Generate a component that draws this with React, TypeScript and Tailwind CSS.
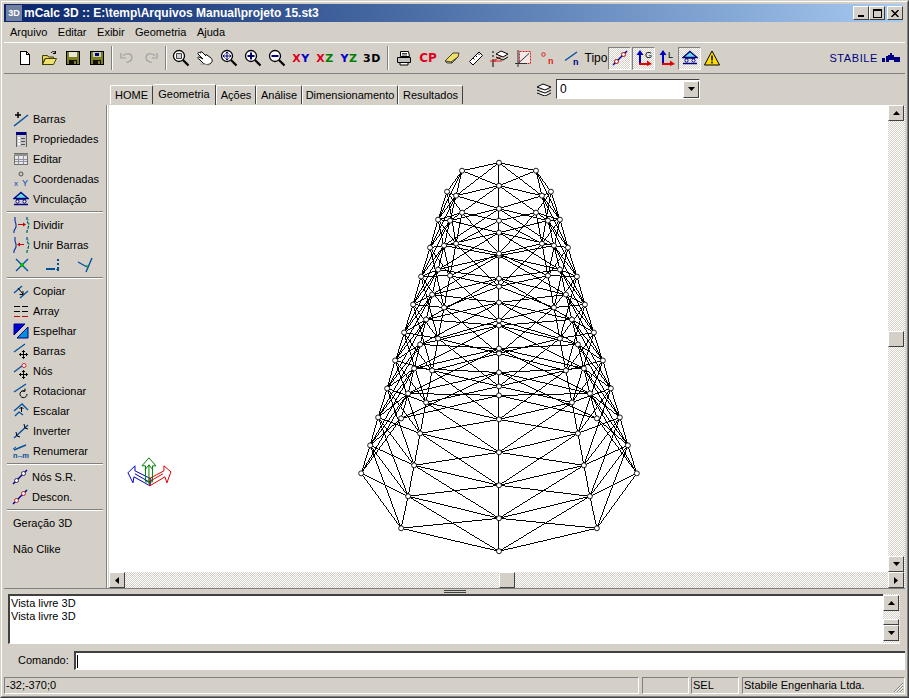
import type { ReactNode } from "react";

const raised = "border border-t-white border-l-white border-r-[#404040] border-b-[#404040] bg-[#d4d0c8]";
const sunken = "border border-t-[#808080] border-l-[#808080] border-r-white border-b-white";
const dither = "bg-[repeating-conic-gradient(#ffffff_0_25%,#d4d0c8_0_50%)] bg-[length:2px_2px]";

function Ico({ children, w = 16, h = 16, crisp = false }: { children: ReactNode; w?: number; h?: number; crisp?: boolean }) {
  return (
    <svg width={w} height={h} viewBox={`0 0 ${w} ${h}`} fill="none" shapeRendering={crisp ? "crispEdges" : undefined} className="shrink-0">
      {children}
    </svg>
  );
}

function Mag({ children }: { children?: ReactNode }) {
  return (
    <Ico w={18} h={18}>
      <circle cx="7" cy="7" r="5.5" fill="#ffffff" stroke="#000" strokeWidth="1.3" />
      <path d="M11 11l5.5 5.5" stroke="#000" strokeWidth="2.2" />
      {children}
    </Ico>
  );
}

function Floppy({ color, extra }: { color: string; extra?: boolean }) {
  return (
    <Ico crisp>
      <path d="M1.5 1.5h13v13h-13z" fill={color} stroke="#000" />
      <path d="M4 2h8v5H4z" fill={extra ? "#c8d0b0" : "#e8e8d8"} />
      <path d="M4 10h8v4H4z" fill="#101010" />
      <path d="M9 11h2v3H9z" fill={color} />
      {extra && <path d="M6 3h4v3H6z" fill="#000080" />}
    </Ico>
  );
}

function Support() {
  return (
    <Ico>
      <path d="M8 1.5L15 7.5H1z" fill="#66e0e8" stroke="#000080" strokeWidth="1.4" />
      <path d="M3 8h10M1 13.5h14" stroke="#000080" strokeWidth="1.4" />
      <circle cx="4.5" cy="10.5" r="1.6" fill="#fff" stroke="#000080" />
      <circle cx="11.5" cy="10.5" r="1.6" fill="#fff" stroke="#000080" />
    </Ico>
  );
}

function Axes({ letter }: { letter: string }) {
  return (
    <Ico w={18} h={16}>
      <path d="M5 14V3" stroke="#0000c0" strokeWidth="2" />
      <path d="M5 0L1.5 5h7z" fill="#0000c0" />
      <path d="M4 14h9" stroke="#e00000" strokeWidth="2" />
      <path d="M12 10.5l5 3.5-5 2z" fill="#e00000" />
      <text x="10" y="8" fontSize="9" fill="#000" fontFamily="Liberation Sans, sans-serif">{letter}</text>
    </Ico>
  );
}

function BarNodes({ end = "#c00000", bar = "#0000a0" }: { end?: string; bar?: string }) {
  return (
    <Ico>
      <path d="M1 15L15 1" stroke={bar} strokeWidth="1.4" />
      <circle cx="4.500" cy="11.500" r="2" fill="#fff" stroke={end} />
      <circle cx="11.500" cy="4.500" r="2" fill="#fff" stroke={end} />
    </Ico>
  );
}

function MoveCross() {
  return (
    <path d="M10.5 7.5v8M6.5 11.5h8M9 9l1.5-1.5L12 9M9 14l1.5 1.5L12 14M8 10l-1.5 1.5L8 13M13 10l1.5 1.5L13 13" stroke="#000" />
  );
}

function Zigzag({ arrow }: { arrow: string }) {
  return (
    <Ico w={18} h={17}>
      <path d="M2 0v4l1 3v3l-2 4v2" stroke="#0030a0" strokeWidth="1.100" />
      <path d="M14 0v4l1.500 3v3l-1.500 4v2" stroke="#0030a0" strokeWidth="1.100" strokeDasharray="3 1.500" />
      <path d="M15 2v2M16 6v2M15 10v2M14 14v2" stroke="#00c040" />
      <path d="M5 7.500h6" stroke="#c00000" />
      <path d={arrow} fill="#c00000" />
    </Ico>
  );
}

const tool = "w-[24px] h-[24px] flex items-center justify-center shrink-0";

function Tool({ children }: { children: ReactNode }) {
  return <div className={tool}>{children}</div>;
}

function Sep() {
  return (
    <div className="w-[6px] h-[24px] flex justify-center shrink-0">
      <div className="w-[2px] h-full border-l border-l-[#808080] border-r border-r-white" />
    </div>
  );
}

function Pressed({ children }: { children: ReactNode }) {
  return <div className={`w-[23px] h-[23px] flex items-center justify-center shrink-0 ${sunken} ${dither}`}>{children}</div>;
}

function Letters({ a, ca, b, cb }: { a: string; ca: string; b: string; cb: string }) {
  return (
    <Tool>
      <span className="font-bold text-[11px] tracking-[0.5px] font-['DejaVu_Sans',sans-serif]">
        <span style={{ color: ca }}>{a}</span>
        <span style={{ color: cb }}>{b}</span>
      </span>
    </Tool>
  );
}

function Toolbar() {
  return (
    <div className="h-[32px] flex items-center pl-[9px] border-t border-t-white border-b border-b-[#808080]">
      <Tool>
        <Ico crisp>
          <path d="M3.5 1.5h6l3 3v10h-9z" fill="#fff" stroke="#000" />
          <path d="M9.5 1.5v3h3" stroke="#000" />
        </Ico>
      </Tool>
      <Tool>
        <Ico>
          <path d="M1.5 5.5h5l1 1.5h5v2h-9l-2 6z" fill="#e8d060" stroke="#404000" />
          <path d="M1.5 14.5l3-6h11l-3 6z" fill="#f0e070" stroke="#404000" />
          <path d="M10 3c1.5-2 3.5-2 4.5 0M14.5 1v2.5H12" stroke="#000" />
        </Ico>
      </Tool>
      <Tool><Floppy color="#7f7f20" /></Tool>
      <Tool><Floppy color="#7f7f20" extra /></Tool>
      <Sep />
      <Tool>
        <Ico>
          <path d="M4 5.5c4-3 9-2 9 2 0 3-3 4.5-6 5" stroke="#a0a0a0" strokeWidth="1.2" />
          <path d="M2 3v5h5" stroke="#a0a0a0" strokeWidth="1.2" />
        </Ico>
      </Tool>
      <Tool>
        <Ico>
          <path d="M12 5.5c-4-3-9-2-9 2 0 3 3 4.5 6 5" stroke="#a0a0a0" strokeWidth="1.2" />
          <path d="M14 3v5H9" stroke="#a0a0a0" strokeWidth="1.2" />
        </Ico>
      </Tool>
      <Sep />
      <Tool>
        <Mag><path d="M4.5 4.5h5v5h-5z" fill="#d0d0d0" stroke="#404040" /></Mag>
      </Tool>
      <Tool>
        <Ico w={18} h={16}>
          <path d="M2 4l5 5-4-2c-2 0-1 2 0 2l4 4c2 2 6 2 8 0 2-2 1-4 0-5l-4-3c-1-1-2 0-1 1L6 2C5 1 4 2 5 3L3.500 2.500C2.500 2 1.500 3 2 4z" fill="#fff" stroke="#000" />
          <path d="M4 14l9 1" stroke="#a0a0a0" />
        </Ico>
      </Tool>
      <Tool>
        <Mag><path d="M7 3v8M3 7h8M5.500 4.500L7 3l1.500 1.500M5.500 9.500L7 11l1.500-1.500M4.500 5.500L3 7l1.500 1.500M9.500 5.500L11 7l-1.500 1.500" stroke="#000080" /></Mag>
      </Tool>
      <Tool>
        <Mag><path d="M7 3.500v7M3.500 7h7" stroke="#000080" strokeWidth="2" /></Mag>
      </Tool>
      <Tool>
        <Mag><path d="M3.500 7h7" stroke="#000080" strokeWidth="2" /></Mag>
      </Tool>
      <Letters a="X" ca="#e00020" b="Y" cb="#0000c8" />
      <Letters a="X" ca="#e00020" b="Z" cb="#008000" />
      <Letters a="Y" ca="#0000c8" b="Z" cb="#008000" />
      <div className="w-[24px] h-[24px] flex items-center justify-center shrink-0 -ml-[1px] mr-[1px] font-bold text-[11px] tracking-[0.5px] text-black font-['DejaVu_Sans',sans-serif]">3D</div>
      <Sep />
      <div className="w-[1px]" />
      <Tool>
        <Ico>
          <path d="M4.500 1.500h8l1 5h-9z" fill="#fff" stroke="#000" />
          <path d="M1.500 7.500h13v5h-13z" fill="#c0c0c0" stroke="#000" />
          <path d="M4 12.500h8v2.500H4z" fill="#fff" stroke="#000" />
          <path d="M6 3.500h5M6 5h5" stroke="#404040" />
        </Ico>
      </Tool>
      <div className={`${tool} font-bold text-[12px] text-[#e00020] font-['DejaVu_Sans',sans-serif]`}>CP</div>
      <Tool>
        <Ico>
          <path d="M1 11l8-8h6l-1 4-6 6H3z" fill="#f0e060" stroke="#404040" />
          <path d="M1 11l6 1 1 1M7 12l7-5" stroke="#404040" />
        </Ico>
      </Tool>
      <Tool>
        <Ico>
          <path d="M1.500 11.500L11 2l3.500 3.500L5 15z" fill="#fff" stroke="#000" />
          <path d="M5 8l1.500 1.500M7.500 5.500L9 7M10 3.500l1.500 1.500" stroke="#000" />
        </Ico>
      </Tool>
      <Tool>
        <Ico w={20} h={17}>
          <path d="M3 1v2M3 5v2M3 9v8" stroke="#000" />
          <path d="M0 11h6M3 11l9-5M3 11h9" stroke="#d02020" />
          <path d="M6 4l5-3 7 3-5 3z" fill="#fff" stroke="#000" />
          <path d="M6 7l7 3 5-3" stroke="#000" />
        </Ico>
      </Tool>
      <div className="w-[24px] h-[24px] flex items-center justify-center shrink-0 -ml-[1px] mr-[1px]">
        <Ico w={17} h={17}>
          <path d="M4.500 1.500h11v12h-11z" fill="#f4e8e8" stroke="#d02020" strokeDasharray="2 1" />
          <path d="M3 0v17M0 13.500h12M3 13.500l11-10" stroke="#303030" />
        </Ico>
      </div>
      <Tool>
        <Ico>
          <circle cx="3.500" cy="4.500" r="1.800" stroke="#e02020" />
          <text x="8" y="14" fontSize="9" fontWeight="bold" fill="#e02020" fontFamily="Liberation Sans, sans-serif">n</text>
        </Ico>
      </Tool>
      <Tool>
        <Ico>
          <path d="M1 10.500L13 2" stroke="#0050a0" strokeWidth="1.400" />
          <text x="9" y="15" fontSize="9" fontWeight="bold" fill="#000080" fontFamily="Liberation Sans, sans-serif">n</text>
        </Ico>
      </Tool>
      <div className="w-[24px] text-center text-[12px] shrink-0">Tipo</div>
      <Pressed><BarNodes /></Pressed>
      <div className="w-[1px]" />
      <Pressed><Axes letter="G" /></Pressed>
      <div className="w-[23px] flex justify-center shrink-0"><Axes letter="L" /></div>
      <Pressed><Support /></Pressed>
      <div className="w-[3px]" />
      <Ico>
        <path d="M8 1L15.500 15H.500z" fill="#ffe000" stroke="#000" />
        <path d="M8 5.500v5M8 11.500v2" stroke="#000" strokeWidth="1.500" />
      </Ico>
      <div className="flex-1" />
      <span className="text-[11px] tracking-[0.6px] text-[#000080] font-['Liberation_Sans',sans-serif]">STABILE</span>
      <div className="ml-[4px] mr-[5px]">
        <Ico w={18} h={10} crisp>
          <path d="M0 5h3v4H0zM4 3h2v6H4zM6 2h2V0h2v2h2v2h2v5h-2V7H7v2H6z" fill="#000080" />
          <path d="M14 4h4v5h-4z" fill="#000080" />
        </Ico>
      </div>
    </div>
  );
}

const tabs = [
  { label: "HOME", w: "w-[43px]" },
  { label: "Geometria", w: "w-[63px]", active: true },
  { label: "Ações", w: "w-[40px]" },
  { label: "Análise", w: "w-[46px]" },
  { label: "Dimensionamento", w: "w-[96px]" },
  { label: "Resultados", w: "w-[65px]" },
];

function TabsRow() {
  return (
    <div className="h-[31px] flex items-end pl-[106px] relative">
      {tabs.map((t) =>
        t.active ? (
          <div key={t.label} className={`${t.w} h-[21px] pb-[2px] flex items-center justify-center border-t border-t-white border-r border-r-[#404040] rounded-t-[2px]`}>
            {t.label}
          </div>
        ) : (
          <div key={t.label} className={`${t.w} h-[19px] mb-[1px] flex items-center justify-center border-t border-l border-t-white border-l-white border-r border-r-[#404040] rounded-t-[2px]`}>
            {t.label}
          </div>
        ),
      )}
      <div className="ml-[73px] mb-[6px] self-end flex items-center gap-[4px]">
        <Ico w={16} h={13}>
          <path d="M1 4l6-3 8 3-6 3zM1 7l8 3 6-3M1 10l8 3 6-3" fill="#fff" stroke="#000" />
        </Ico>
        <div className="w-[144px] h-[20px] flex items-center bg-white border border-t-[#404040] border-l-[#404040] border-r-white border-b-white">
          <span className="flex-1 pl-[3px] text-[12px]">0</span>
          <div className={`w-[16px] h-[17px] flex items-center justify-center ${raised}`}>
            <Arrow d="M0 0h7L3.500 4z" />
          </div>
        </div>
      </div>
    </div>
  );
}

function Arrow({ d, w = 7, h = 4 }: { d: string; w?: number; h?: number }) {
  return (
    <svg width={w} height={h} viewBox={`0 0 ${w} ${h}`} className="shrink-0">
      <path d={d} fill="#000" />
    </svg>
  );
}

function Item({ icon, label }: { icon: ReactNode; label: string }) {
  return (
    <div className="h-[20px] flex items-center pl-[9px]">
      <div className="w-[20px] flex justify-start shrink-0">{icon}</div>
      <span>{label}</span>
    </div>
  );
}

function Divider() {
  return (
    <div className="h-[6px] flex items-center px-[3px]">
      <div className="w-full h-[2px] border-t border-t-[#808080] border-b border-b-white" />
    </div>
  );
}

function SidePanel() {
  return (
    <div className="w-[103px] shrink-0 pt-[4px] border-r border-r-[#808080]">
      <Item
        label="Barras"
        icon={
          <Ico>
            <path d="M1 15L15 4" stroke="#0050a0" strokeWidth="1.500" />
            <path d="M5 1v6M2 4h6" stroke="#000" strokeWidth="1.500" />
          </Ico>
        }
      />
      <Item
        label="Propriedades"
        icon={
          <Ico crisp>
            <path d="M3 1h10v15H3z" fill="#c8c8c8" stroke="#606060" />
            <path d="M3 1h10v3H3z" fill="#000080" />
            <path d="M5 6h2v2H5zM5 9h2v2H5zM5 12h2v2H5z" fill="#fff" />
            <path d="M8 7h4M8 10h4M8 13h4" stroke="#505050" />
          </Ico>
        }
      />
      <Item
        label="Editar"
        icon={
          <Ico crisp>
            <path d="M1.500 2.500h13v11h-13z" fill="#e8e8e8" stroke="#707070" />
            <path d="M1 3h14v2H1z" fill="#909090" />
            <path d="M5.500 5v8M10.500 5v8M2 8.500h12M2 10.500h12" stroke="#9090a0" />
          </Ico>
        }
      />
      <Item
        label="Coordenadas"
        icon={
          <Ico>
            <circle cx="8" cy="3" r="2" stroke="#505050" />
            <text x="1" y="15" fontSize="8" fill="#0040c0" fontFamily="Liberation Sans, sans-serif">x</text>
            <text x="9" y="15" fontSize="9" fill="#0040c0" fontFamily="Liberation Sans, sans-serif">Y</text>
          </Ico>
        }
      />
      <Item label="Vinculação" icon={<Support />} />
      <Divider />
      <Item label="Dividir" icon={<Zigzag arrow="M10 5.500l3 2-3 2z" />} />
      <Item label="Unir Barras" icon={<Zigzag arrow="M7 5.500l-3 2 3 2z" />} />
      <div className="h-[20px] flex items-center pl-[4px]">
        <div className="w-[29px] flex justify-center pr-[2px]">
          <Ico>
            <path d="M2 2l12 12M14 2L2 14" stroke="#0050a0" strokeWidth="1.400" />
            <circle cx="8" cy="8" r="2" fill="#00c000" />
          </Ico>
        </div>
        <div className="w-[32px] flex justify-center">
          <Ico crisp>
            <path d="M1 12h9" stroke="#0050a0" strokeWidth="2" />
            <path d="M13 2v2M13 6v2M13 10v4" stroke="#0050a0" strokeWidth="2" />
            <path d="M11 12h1" stroke="#00c000" />
          </Ico>
        </div>
        <div className="w-[32px] flex justify-center">
          <Ico>
            <path d="M1 5l9 5M15 1l-6 14" stroke="#0050a0" strokeWidth="1.400" />
            <circle cx="10" cy="9" r="1" fill="#00c000" />
          </Ico>
        </div>
      </div>
      <Divider />
      <Item
        label="Copiar"
        icon={
          <Ico>
            <path d="M1 10l8-7M7 15l8-7" stroke="#0050a0" strokeWidth="1.300" />
            <path d="M5 5l5 6M10 8v3.500H6.500" stroke="#000" />
          </Ico>
        }
      />
      <Item
        label="Array"
        icon={
          <Ico crisp>
            <path d="M1 3h6M9 3h6M1 8h6M9 8h6" stroke="#000" />
            <path d="M1 13h6M9 13h6" stroke="#c00000" />
          </Ico>
        }
      />
      <Item
        label="Espelhar"
        icon={
          <Ico>
            <path d="M1 1h11L1 12z" fill="#0000d0" stroke="#000080" />
            <path d="M15 4v11H4z" fill="#0090e0" stroke="#000080" />
          </Ico>
        }
      />
      <Item
        label="Barras"
        icon={
          <Ico>
            <path d="M1 9L12 1" stroke="#0050a0" strokeWidth="1.300" />
            <MoveCross />
          </Ico>
        }
      />
      <Item
        label="Nós"
        icon={
          <Ico>
            <path d="M1 9L9 3" stroke="#0050a0" strokeWidth="1.300" />
            <circle cx="11" cy="2.500" r="2" fill="#fff" stroke="#d02020" />
            <MoveCross />
          </Ico>
        }
      />
      <Item
        label="Rotacionar"
        icon={
          <Ico>
            <path d="M1 9L13 1" stroke="#0050a0" strokeWidth="1.300" />
            <path d="M14 11a3.500 3.500 0 1 1-2-3M12 5.500V8.200H9.500" stroke="#000" />
          </Ico>
        }
      />
      <Item
        label="Escalar"
        icon={
          <Ico>
            <path d="M1 8l8-7 6 6M2 13l4-4 4 3" stroke="#0050a0" strokeWidth="1.300" />
            <path d="M8.500 9V4M6.500 6l2-2 2 2" stroke="#000" />
          </Ico>
        }
      />
      <Item
        label="Inverter"
        icon={
          <Ico>
            <path d="M1 15L15 2" stroke="#0050a0" strokeWidth="1.400" />
            <path d="M11 1l1 4 3 1M3 9l1 4 3 1" stroke="#000" />
          </Ico>
        }
      />
      <Item
        label="Renumerar"
        icon={
          <Ico>
            <path d="M1 7l12-5" stroke="#0050a0" strokeWidth="1.400" />
            <path d="M0 6l3-2" stroke="#0050a0" />
            <text x="0" y="15" fontSize="7.500" fontWeight="bold" fill="#0050a0" textLength="16" fontFamily="Liberation Sans, sans-serif">n→m</text>
          </Ico>
        }
      />
      <Divider />
      <div className="-ml-[1px]">
        <Item label="Nós S.R." icon={<BarNodes end="#303060" />} />
        <Item label="Descon." icon={<BarNodes end="#c02030" />} />
      </div>
      <Divider />
      <div className="h-[20px] flex items-center pl-[9px]">Geração 3D</div>
      <div className="h-[20px] mt-[6px] flex items-center pl-[9px]">Não Clike</div>
    </div>
  );
}

function towerPath() {
  const levels = Array.from({ length: 11 }, (_, i) => ({ y: 473 - 28.2 * i, r: 138 - 8.6 * i }));
  const pt = (lvl: number, k: number) => {
    const t = (k * Math.PI) / 4;
    const { y, r } = levels[lvl];
    return [Math.round(498 + r * Math.sin(t)) + 0.5, Math.round(y + r * 0.565 * Math.cos(t)) + 0.5];
  };
  let d = "";
  const seg = (a: number[], b: number[]) => {
    d += `M${a[0]} ${a[1]}L${b[0]} ${b[1]}`;
  };
  const nodes: number[][] = [];
  levels.forEach((_, i) => {
    for (let k = 0; k < 8; k++) {
      nodes.push(pt(i, k));
      seg(pt(i, k), pt(i, k + 1));
      if (i < levels.length - 1) {
        seg(pt(i, k), pt(i + 1, k));
        seg(pt(i, k), pt(i + 1, k + 1));
        seg(pt(i, k + 1), pt(i + 1, k));
      }
    }
  });
  return { d, nodes };
}

function Viewport() {
  const { d, nodes } = towerPath();
  return (
    <svg viewBox="108 105 780 467" className="w-full h-full block">
      <path d={d} stroke="#000" strokeWidth="1" fill="none" shapeRendering="crispEdges" />
      {nodes.map(([x, y], i) => (
        <circle key={i} cx={x} cy={y} r="2.500" fill="#fff" stroke="#000" strokeWidth="0.900" />
      ))}
      <g fill="none" strokeWidth="1">
        <path d="M127 473l7-7v5l16 8-1 7-16-9-1 6zM134 474l14 8" stroke="#0000c0" />
        <path d="M170 472l-7-6v5l-15 8 1 7 15-9 2 6zM162 474l-14 8" stroke="#e00000" />
        <path d="M148 458l-7 8h3.500v16h7v-16h3.500zM144 470l4-5 4 5M148 465v19" stroke="#008000" />
      </g>
    </svg>
  );
}

function Splitter() {
  return (
    <div className="h-[5px] flex items-center justify-center">
      <div className="w-[22px] h-[3px] border-t border-b border-[#404040] bg-[#d4d0c8]" />
    </div>
  );
}

function ScrollBtn({ d, w = 7, h = 4, className = "" }: { d: string; w?: number; h?: number; className?: string }) {
  return (
    <div className={`w-[16px] h-[16px] shrink-0 flex items-center justify-center ${raised} ${className}`}>
      <Arrow d={d} w={w} h={h} />
    </div>
  );
}

const UP = "M3.500 0L7 4H0z";
const DOWN = "M0 0h7L3.500 4z";
const LEFT = "M4 0v7L0 3.500z";
const RIGHT = "M0 0v7L4 3.500z";

function Main() {
  return (
    <div className="h-[484px] flex border-b border-b-[#808080]">
      <SidePanel />
      <div className="flex-1 flex flex-col pl-[1px] border-l border-l-white">
        <div className="flex-1 flex min-h-0">
          <div className="flex-1 bg-white min-w-0">
            <Viewport />
          </div>
          <div className={`w-[17px] flex flex-col ${dither} pr-[1px]`}>
            <ScrollBtn d={UP} />
            <div className="h-[210px]" />
            <div className={`w-[16px] h-[16px] ${raised}`} />
            <div className="flex-1" />
            <ScrollBtn d={DOWN} />
          </div>
        </div>
        <div className={`h-[16px] flex ${dither} pr-[1px]`}>
          <ScrollBtn d={LEFT} w={4} h={7} />
          <div className="w-[374px]" />
          <div className={`w-[16px] h-[16px] ${raised}`} />
          <div className="flex-1" />
          <ScrollBtn d={RIGHT} w={4} h={7} />
        </div>
      </div>
    </div>
  );
}

function LogPanel() {
  return (
    <div className="h-[50px] flex pl-[4px] pr-[5px]">
      <div className="flex-1 bg-white border-t-2 border-l-2 border-t-[#404040] border-l-[#404040] border-b border-b-white pl-[1px] pt-[1px] leading-[13px]">
        <div>Vista livre 3D</div>
        <div>Vista livre 3D</div>
      </div>
      <div className={`w-[17px] pt-[1px] pb-[2px] flex flex-col border-b border-b-white ${dither}`}>
        <ScrollBtn d={UP} />
        <div className="h-[9px]" />
        <div className={`w-[16px] h-[7px] ${raised}`} />
        <ScrollBtn d={DOWN} />
      </div>
    </div>
  );
}

function CommandRow() {
  return (
    <div className="h-[29px] flex items-end pb-[3px]">
      <div className="w-[70px] pl-[14px] h-[19px] flex items-center">Comando:</div>
      <div className="flex-1 h-[19px] bg-white border-t-2 border-l-2 border-t-[#404040] border-l-[#404040] border-b border-b-white flex items-center pl-[1px]">
        <div className="w-[1px] h-[13px] bg-black" />
      </div>
    </div>
  );
}

function StatusBar() {
  const cell = `h-[17px] flex items-center ${sunken} overflow-hidden`;
  return (
    <div className="h-[21px] pt-[4px] flex gap-[3px]">
      <div className={`${cell} w-[635px] pl-[1px]`}>-32;-370;0</div>
      <div className={`${cell} w-[47px] mr-[-1px]`} />
      <div className={`${cell} w-[48px] pl-[1px]`}>SEL</div>
      <div className={`${cell} flex-1 pl-[1px] relative`}>
        Stabile Engenharia Ltda.
        <svg width="12" height="12" viewBox="0 0 12 12" className="absolute right-0 bottom-0">
          <path d="M11 2L2 11M11 5l-6 6M11 8l-3 3" stroke="#808080" />
          <path d="M11 3L3 11M11 6l-5 5M11 9l-2 2" stroke="#fff" />
        </svg>
      </div>
    </div>
  );
}

function TitleBar() {
  return (
    <div className="h-[18px] mr-[2px] flex items-center bg-gradient-to-r from-[#0a246a] to-[#a6caf0]">
      <div className="w-[16px] h-[16px] ml-[2px] flex items-center justify-center bg-[#7080a0] text-white text-[9px] font-bold">3D</div>
      <span className="ml-[2px] text-white font-bold text-[12px] whitespace-nowrap">mCalc 3D :: E:\temp\Arquivos Manual\projeto 15.st3</span>
      <div className="flex-1" />
      <div className={`w-[16px] h-[14px] flex items-end justify-center pb-[2px] ${raised}`}>
        <div className="w-[6px] h-[2px] bg-black" />
      </div>
      <div className={`w-[16px] h-[14px] flex items-center justify-center ${raised}`}>
        <div className="w-[9px] h-[9px] border border-black border-t-2" />
      </div>
      <div className={`w-[16px] h-[14px] ml-[2px] flex items-center justify-center ${raised}`}>
        <svg width="8" height="7" viewBox="0 0 8 7">
          <path d="M0.500 0L7.500 7M7.500 0L0.500 7" stroke="#000" strokeWidth="1.500" />
        </svg>
      </div>
    </div>
  );
}

function MenuBar() {
  const menus = ["Arquivo", "Editar", "Exibir", "Geometria", "Ajuda"];
  return (
    <div className="h-[20px] flex items-center pl-[6px] gap-[10.5px]">
      {menus.map((m) => (
        <span key={m}>{m}</span>
      ))}
    </div>
  );
}

export default function App() {
  return (
    <div className="w-[909px] h-[698px] overflow-hidden bg-[#d4d0c8] text-black text-[11px] leading-none font-['Liberation_Sans',sans-serif] border-t border-l border-t-[#d4d0c8] border-l-[#d4d0c8] border-r border-b border-r-[#404040] border-b-[#404040]">
      <div className="h-full border border-t-white border-l-white border-r-[#808080] border-b-[#808080] p-[2px]">
        <TitleBar />
        <MenuBar />
        <Toolbar />
        <TabsRow />
        <Main />
        <Splitter />
        <LogPanel />
        <CommandRow />
        <StatusBar />
      </div>
    </div>
  );
}
